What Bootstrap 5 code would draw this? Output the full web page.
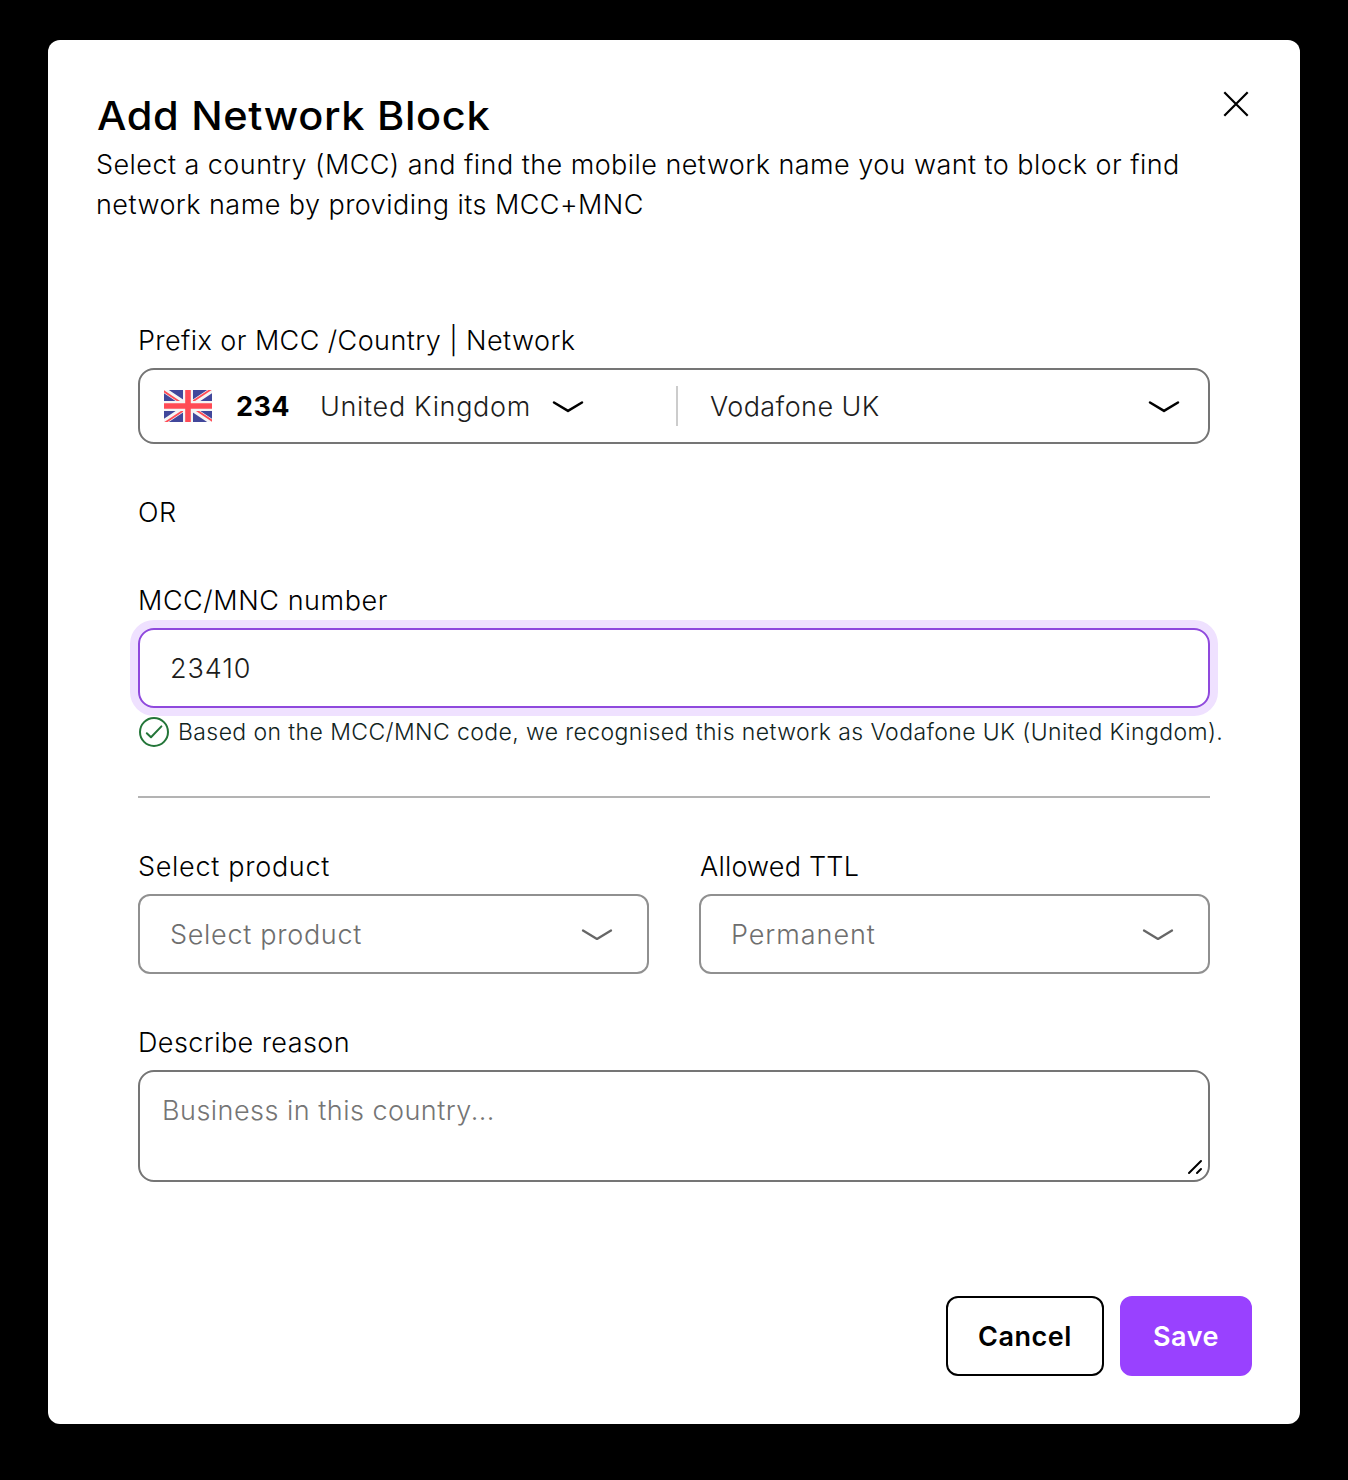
<!DOCTYPE html>
<html lang="en">
<head>
<meta charset="utf-8">
<meta name="viewport" content="width=device-width, initial-scale=1">
<title>Add Network Block</title>
<link href="https://cdn.jsdelivr.net/npm/bootstrap@5.3.0/dist/css/bootstrap.min.css" rel="stylesheet">
<style>
body{background:#000;font-family:Inter,"Liberation Sans",sans-serif;font-size:27px;line-height:40px;font-weight:300;letter-spacing:.42px;color:#000;padding:40px 48px 56px}
.dialog-panel{height:1384px;background:#fff;border-radius:12px;padding:48px}
.dialog-title{font-size:39px;line-height:48px;font-weight:500;letter-spacing:.62px;margin:4px 0 4px 1px;transform:scaleX(1.065);transform-origin:left}
.dialog-intro{white-space:nowrap;padding-top:1px;letter-spacing:.445px}
.close-x{padding:0;border:0;background:none;width:32px;height:32px;line-height:0}
.dialog-fields{margin:95px 42px 0}
.field-label{height:40px;padding-top:1px;margin-bottom:8px;white-space:nowrap}
.field-box{border:2px solid #757575;border-radius:16px;height:76px;background:#fff}
.field-box svg,.half-box svg{flex:none}
.box-text{padding-top:2px}
.country-pick{width:536px;padding-left:24px}
.country-name{width:232px;letter-spacing:.67px}
.network-name{padding-left:32px;letter-spacing:.42px}
.network-arrow{margin-right:28px}
.dial-code{font-weight:700;margin-left:24px;width:84px}
.ink{color:#1c1c1c}
.net-divider{width:2px;height:40px;background:#ccc}
.or-row{margin:49px 0 47px}
.ls-wide{letter-spacing:.7px}
.ls-wider{letter-spacing:.95px}
.ls-mid{letter-spacing:.57px}
.ls-tight{letter-spacing:.2px;padding-left:1px}
.ls-digits{letter-spacing:.9px}
.code-input{height:80px;border:2px solid #8f49dd;border-radius:16px;box-shadow:0 0 0 8px #efe1ff;padding:2px 30px 0}
.hint{margin-top:8px;font-size:23px;line-height:32px;letter-spacing:.4px;color:#12241d}
.rule{height:2px;background:#b3b3b3;margin:48px 0}
.half-field{width:511px}
.half-box{height:80px;border:2px solid #909090;border-radius:12px;color:#6e6e6e;padding:0 34px 0 30px}
.reason-label{margin-top:48px}
.reason-box{height:112px;align-items:flex-start;padding:17px 5px 5px 22px;color:#757575;letter-spacing:.48px}
.dialog-actions{margin-top:114px}
.act{height:80px;border:2px solid #000;border-radius:12px;font-size:27px;font-weight:600;letter-spacing:.55px;padding:2px 0 0}
.act-cancel{width:158px;color:#000;background:#fff}
.act-save{width:132px;color:#fff;background:#9941ff;border-color:#9941ff}
</style>
<script src="https://cdn.jsdelivr.net/npm/bootstrap@5.3.0/dist/js/bootstrap.bundle.min.js"></script>
</head>
<body>
<main class="dialog-panel">
  <header class="d-flex justify-content-between align-items-start">
    <div>
      <h1 class="dialog-title">Add Network Block</h1>
      <div class="dialog-intro">Select a country (MCC) and find the mobile network name you want to block or find<br>network name by providing its MCC+MNC</div>
    </div>
    <button class="close-x" aria-label="Close"><svg width="32" height="32" viewBox="0 0 32 32" fill="none" stroke="#000" stroke-width="2.2"><path d="M4.3 4.3 27.7 27.7M27.7 4.3 4.3 27.7"/></svg></button>
  </header>

  <section class="dialog-fields">
    <div class="field-label">Prefix or MCC /Country | Network</div>
    <div class="field-box d-flex align-items-center">
      <div class="country-pick d-flex align-items-center">
        <svg width="48" height="32" viewBox="0 0 48 32"><path fill="#41479b" d="M0 0h48v32H0z"/><path stroke="#f5f5f5" stroke-width="5.4" d="M0 0 48 32M48 0 0 32"/><path stroke="#ff4b55" stroke-width="1.8" d="M-.6 .9 23 16.7M48.6 31.1 25 15.3M47.4 -.9 23 15.3M.6 32.9 25 16.7"/><path fill="#f5f5f5" d="M19 0h10v32H19zM0 11h48v10H0z"/><path fill="#ff4b55" d="M21.2 0h5.6v32h-5.6zM0 13.2h48v5.6H0z"/></svg>
        <div class="dial-code box-text">234</div>
        <div class="country-name box-text ink">United Kingdom</div>
        <svg width="32" height="16" viewBox="0 0 32 16" fill="none" stroke="#000" stroke-width="2.5" stroke-linecap="round" stroke-linejoin="round"><path d="M2 4.5 16 12.9 30 4.5"/></svg>
      </div>
      <div class="net-divider"></div>
      <div class="network-name box-text ink flex-grow-1">Vodafone UK</div>
      <svg class="network-arrow" width="32" height="16" viewBox="0 0 32 16" fill="none" stroke="#000" stroke-width="2.5" stroke-linecap="round" stroke-linejoin="round"><path d="M2 4.5 16 12.9 30 4.5"/></svg>
    </div>

    <div class="or-row">OR</div>

    <div class="field-label ls-mid">MCC/MNC number</div>
    <div class="code-input ink ls-digits d-flex align-items-center">23410</div>
    <div class="hint d-flex align-items-center text-nowrap">
      <svg class="flex-shrink-0" width="32" height="32" viewBox="0 0 32 32" fill="none" stroke="#237538" stroke-width="2"><circle cx="16" cy="16" r="14"/><path d="m8.8 17.2 4.2 4L23.4 10.4" stroke-linecap="round" stroke-linejoin="round"/></svg>
      <span class="ms-2">Based on the MCC/MNC code, we recognised this network as Vodafone UK (United Kingdom).</span>
    </div>

    <div class="rule"></div>

    <div class="d-flex justify-content-between">
      <div class="half-field">
        <div class="field-label ls-wide">Select product</div>
        <div class="half-box ls-wide d-flex align-items-center justify-content-between"><span class="box-text">Select product</span>
          <svg width="32" height="16" viewBox="0 0 32 16" fill="none" stroke="#666" stroke-width="2.3" stroke-linecap="round" stroke-linejoin="round"><path d="M2 4.5 16 12.9 30 4.5"/></svg></div>
      </div>
      <div class="half-field">
        <div class="field-label ls-tight">Allowed TTL</div>
        <div class="half-box ls-wider d-flex align-items-center justify-content-between"><span class="box-text">Permanent</span>
          <svg width="32" height="16" viewBox="0 0 32 16" fill="none" stroke="#666" stroke-width="2.3" stroke-linecap="round" stroke-linejoin="round"><path d="M2 4.5 16 12.9 30 4.5"/></svg></div>
      </div>
    </div>

    <div class="field-label reason-label">Describe reason</div>
    <div class="field-box reason-box d-flex justify-content-between"><span class="box-text">Business in this country...</span>
      <svg class="align-self-end" width="16" height="16" viewBox="0 0 16 16" stroke="#000" stroke-width="2" stroke-linecap="round"><path d="M2 14 14 2M10 14l4-4"/></svg></div>
  </section>

  <footer class="dialog-actions d-flex justify-content-end gap-3">
    <button class="act act-cancel">Cancel</button>
    <button class="act act-save">Save</button>
  </footer>
</main>
</body>
</html>
